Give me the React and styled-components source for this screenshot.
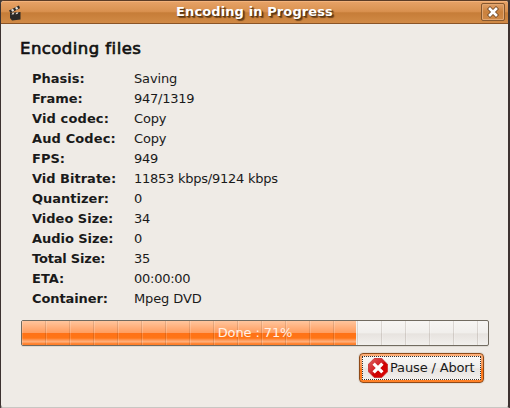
import React from "react";
import styled, { createGlobalStyle } from "styled-components";

const GlobalStyle = createGlobalStyle`
  * { box-sizing: border-box; }
  html, body { margin: 0; padding: 0; overflow: hidden; }
  body { font-family: "DejaVu Sans", sans-serif; font-size: 13px; color: #1a1a1a; background: #443c38; }
`;

const Window = styled.div`
  width: 510px;
  height: 408px;
  display: flex;
  flex-direction: column;
  background: #efebe6;
  border: 1px solid #3c3230;
  border-right-width: 2px;
  border-bottom-color: #c9c6c2;
  border-top-color: #5b3c26;
  border-radius: 4px 4px 3px 3px;
  overflow: hidden;
`;

const TitleBar = styled.header`
  flex: none;
  height: 23px;
  display: grid;
  grid-template-columns: 34px 1fr 34px;
  align-items: start;
  border-top: 1px solid #f2b27b;
  border-bottom: 1px solid #8a5427;
  background: linear-gradient(#e6a165 0, #d9914f 45%, #c67d38 52%, #d18a46 100%);
`;

const AppIcon = styled.svg`
  display: block;
  margin: 3px 0 0 7px;
  width: 16px;
  height: 16px;
`;

const Title = styled.h1`
  margin: 0;
  text-align: center;
  white-space: nowrap;
  font-size: 13px;
  line-height: 20px;
  letter-spacing: 0.11px;
  color: #fff;
  text-shadow: 1px 1px 1px #503010, 2px 2px 1px rgba(70, 40, 10, 0.65);
`;

const CloseButton = styled.button`
  width: 24px;
  height: 18px;
  margin: 1px 0 0 7px;
  padding: 0;
  display: flex;
  align-items: center;
  justify-content: center;
  border: 1px solid #85572e;
  border-radius: 2px;
  background: linear-gradient(#e0a068, #ca813d 50%, #d08a48);
  box-shadow: inset 0 0 0 1px #e2a772;
`;

const Content = styled.main`
  flex: 1;
  display: flex;
  flex-direction: column;
  padding: 14px 19px 23px 19px;
`;

const Heading = styled.h2`
  margin: 0 0 10px;
  font-size: 16.5px;
  font-weight: 400;
  line-height: 21px;
  letter-spacing: 0.45px;
  color: #111;
  -webkit-text-stroke: 0.65px #111;
`;

const Stats = styled.dl`
  margin: 0 0 0 12px;
  display: grid;
  grid-template-columns: 102px 1fr;
  grid-auto-rows: 20px;
  line-height: 20px;
  white-space: nowrap;
`;

const Label = styled.dt`
  font-weight: bold;
  letter-spacing: ${(p) => p.$spacing}px;
`;

const Value = styled.dd`
  margin: 0;
  letter-spacing: ${(p) => p.$spacing}px;
`;

const ProgressTrack = styled.div`
  flex: none;
  height: 26px;
  margin: 11px 0 0 1px;
  width: 468px;
  display: grid;
  border: 1px solid #716b60;
  border-radius: 2px;
  background: linear-gradient(#f7f5f3 0, #f1efec 48%, #e7e3df 54%, #f2f0ed 100%);
  box-shadow: 0 1px 0 #dedad4;
  overflow: hidden;
`;

const ProgressFill = styled.div`
  grid-area: 1 / 1;
  background: linear-gradient(#ffc59d 0, #ff9d5e 11.9px, #ff7216 12px, #ff7516 17px, #ff9855 19px, #ffb482 21px, #ff8a3c 22px, #ff7b24 24px);
`;

const Segments = styled.div`
  grid-area: 1 / 1;
  background: repeating-linear-gradient(90deg, rgba(255, 255, 255, 0.17) 0 1px, transparent 1px 23px, rgba(70, 50, 35, 0.15) 23px 24px);
`;

const ProgressText = styled.span`
  grid-area: 1 / 1;
  text-align: center;
  line-height: 24px;
  letter-spacing: -0.1px;
  color: #fff1e5;
`;

const Actions = styled.footer`
  display: flex;
  justify-content: flex-end;
  padding: 7px 5px 0 0;
`;

const AbortButton = styled.button`
  width: 125px;
  height: 30px;
  padding: 2px;
  border: 1px solid #8f4a18;
  border-radius: 4px;
  background: linear-gradient(#ffb27c, #f8914c 48%, #ff7515 54%, #ff8128);
  box-shadow: 0 0 0 1px rgba(150, 140, 130, 0.14);
  font: inherit;
  color: #1a1a1a;
`;

const ButtonFace = styled.span`
  height: 24px;
  display: flex;
  align-items: center;
  gap: 2px;
  padding-left: 5px;
  border: 1px dotted #37322d;
  background: linear-gradient(#f9f7f6, #f0eeeb 48%, #e8e4e0 54%, #f1eeeb);
  white-space: nowrap;
  letter-spacing: -0.15px;
`;

const ButtonLabel = styled.span`
  padding-bottom: 2px;
`;

const STATS = [
  ["Phasis:", "Saving", 0, -0.15],
  ["Frame:", "947/1319", 0, -0.25],
  ["Vid codec:", "Copy", 0.12, -0.15],
  ["Aud Codec:", "Copy", 0.12, -0.15],
  ["FPS:", "949", 0, -0.25],
  ["Vid Bitrate:", "11853 kbps/9124 kbps", 0, -0.25],
  ["Quantizer:", "0", 0, 0],
  ["Video Size:", "34", 0, -0.25],
  ["Audio Size:", "0", -0.05, 0],
  ["Total Size:", "35", -0.2, -0.25],
  ["ETA:", "00:00:00", 0, -0.25],
  ["Container:", "Mpeg DVD", -0.1, -0.12],
];

const percent = 71.7;

function ClapperIcon() {
  return (
    <AppIcon viewBox="0 0 16 16">
      <path d="M1 5.5 11 .5l1 2.7L2.5 8z" fill="#2b2a28" />
      <path d="m3 4.7 2-.9 1.2 2-2 .9zM7 2.7l2-.9 1.2 2-2 .9z" fill="#e7e3dc" />
      <path d="M2 7.8 12.5 7v7.5L4 15.6 2 13z" fill="#292826" />
      <path d="m4.5 7.7 2-.1-1 1.8-2 .1zM8.5 7.4l2-.1-1 1.8-2 .1z" fill="#d8d4cd" />
    </AppIcon>
  );
}

function CloseIcon() {
  return (
    <svg width="12" height="12" viewBox="0 0 12 12">
      <path d="m3 3 6 6m0-6-6 6" stroke="#69411f" strokeWidth="4.2" strokeLinecap="square" />
      <path d="m3 3 6 6m0-6-6 6" stroke="#fff" strokeWidth="2.7" strokeLinecap="square" />
    </svg>
  );
}

function StopIcon() {
  return (
    <svg width="20" height="20" viewBox="0 0 20 20">
      <defs>
        <linearGradient id="stop" x1="0" y1="0" x2="1" y2="1">
          <stop offset="0" stopColor="#df6262" />
          <stop offset=".5" stopColor="#d01a1e" />
          <stop offset=".51" stopColor="#cc0000" />
          <stop offset="1" stopColor="#dc0606" />
        </linearGradient>
      </defs>
      <path d="M6.2.5h7.6l5.7 5.7v7.6l-5.7 5.7H6.2L.5 13.8V6.2z" fill="url(#stop)" stroke="#c82a2a" strokeWidth=".8" />
      <path d="m6.8 6.8 6.4 6.4m0-6.4-6.4 6.4" stroke="#fff" strokeWidth="3.3" strokeLinecap="square" />
    </svg>
  );
}

export default function App() {
  return (
    <>
      <GlobalStyle />
      <Window>
        <TitleBar>
          <ClapperIcon />
          <Title>Encoding in Progress</Title>
          <CloseButton aria-label="Close"><CloseIcon /></CloseButton>
        </TitleBar>
        <Content>
          <Heading>Encoding files</Heading>
          <Stats>
            {STATS.map(([label, value, labelSpacing, valueSpacing]) => (
              <React.Fragment key={label}>
                <Label $spacing={labelSpacing}>{label}</Label>
                <Value $spacing={valueSpacing}>{value}</Value>
              </React.Fragment>
            ))}
          </Stats>
          <ProgressTrack>
            <ProgressFill style={{ width: `${percent}%` }} />
            <Segments />
            <ProgressText>Done : 71%</ProgressText>
          </ProgressTrack>
          <Actions>
            <AbortButton>
              <ButtonFace><StopIcon /><ButtonLabel>Pause / Abort</ButtonLabel></ButtonFace>
            </AbortButton>
          </Actions>
        </Content>
      </Window>
    </>
  );
}
